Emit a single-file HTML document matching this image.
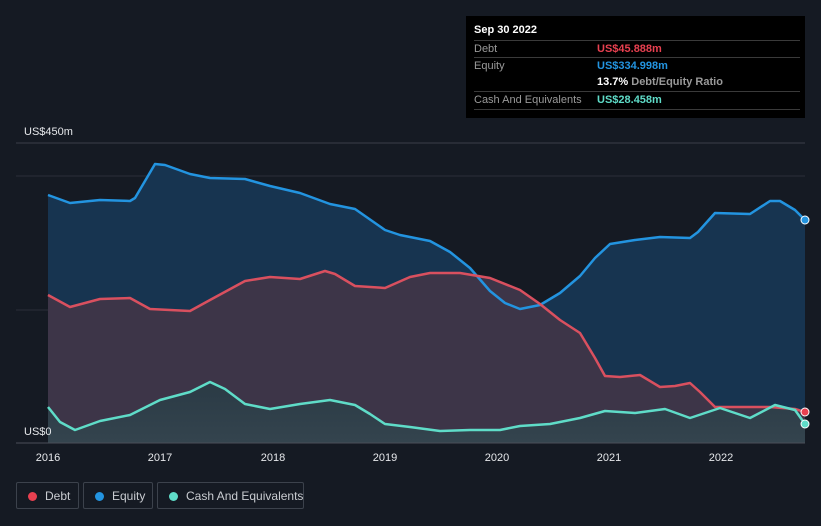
<!DOCTYPE html>
<html style="margin:0;width:821px;height:526px;overflow:hidden"><head><style>
body{margin:0;width:821px;height:526px;background:#151a23;font-family:"Liberation Sans",sans-serif;overflow:hidden;position:relative}
.tt{position:absolute;left:466px;top:16px;width:339px;height:102px;background:#000;color:#fff;font-size:11px}
.row{position:absolute;left:8px;width:326px;border-top:1px solid #3a3a3a;height:17px;line-height:17px;color:#9a9a9a;white-space:nowrap}
.row b{position:absolute;left:123px;font-weight:bold}
.leg{position:absolute;top:482px;height:27px;border:1px solid #3c424c;border-radius:2px;color:#c9ccd1;font-size:12px;line-height:27px;box-sizing:border-box;white-space:nowrap}
.leg i{position:absolute;left:11px;top:9px;width:9px;height:9px;border-radius:50%}
.leg span{position:absolute;left:28px}
</style></head><body>
<svg width="821" height="526" style="position:absolute;left:0;top:0">
<defs><linearGradient id="g" x1="0" y1="0" x2="0" y2="1"><stop offset="0" stop-color="#2a3a45"/><stop offset="1" stop-color="#34444e"/></linearGradient></defs>
<line x1="16" y1="143" x2="805" y2="143" stroke="#3a3f48"/>
<line x1="16" y1="176" x2="805" y2="176" stroke="#2a2f38"/>
<line x1="16" y1="310" x2="805" y2="310" stroke="#2a2f38"/>
<polygon fill="#173450" points="48,195 70,203 100,200 130,201 135,198 155,164 165,165 190,174 210,178 245,179 270,186 300,193 330,204 355,209 365,216 385,230 400,235 430,241 450,252 470,268 490,291 505,303 520,309 540,305 560,293 580,276 595,258 610,244 635,240 660,237 690,238 698,232 715,213 750,214 770,201 780,201 795,210 805,220 805,443 48,443"/>
<polygon fill="#3d3548" points="48,295 70,307 100,299 130,298 150,309 190,311 210,300 245,281 270,277 300,279 325,271 335,274 355,286 385,288 410,277 430,273 460,273 490,278 520,290 540,304 560,320 580,333 595,358 605,376 620,377 640,375 660,387 675,386 690,383 700,392 715,407 740,407 770,407 795,409 805,412 805,443 48,443"/>
<polygon fill="url(#g)" points="48,407 60,422 75,430 100,421 130,415 160,400 190,392 210,382 225,389 245,404 270,409 300,404 330,400 355,405 370,414 385,424 410,427 440,431 470,430 500,430 520,426 550,424 580,418 605,411 635,413 665,409 690,418 720,408 750,418 775,405 795,410 805,424 805,443 48,443"/>
<polyline fill="none" stroke="#2394e0" stroke-width="2.5" stroke-linejoin="round" points="48,195 70,203 100,200 130,201 135,198 155,164 165,165 190,174 210,178 245,179 270,186 300,193 330,204 355,209 365,216 385,230 400,235 430,241 450,252 470,268 490,291 505,303 520,309 540,305 560,293 580,276 595,258 610,244 635,240 660,237 690,238 698,232 715,213 750,214 770,201 780,201 795,210 805,220"/>
<polyline fill="none" stroke="#d9505f" stroke-width="2.5" stroke-linejoin="round" points="48,295 70,307 100,299 130,298 150,309 190,311 210,300 245,281 270,277 300,279 325,271 335,274 355,286 385,288 410,277 430,273 460,273 490,278 520,290 540,304 560,320 580,333 595,358 605,376 620,377 640,375 660,387 675,386 690,383 700,392 715,407 740,407 770,407 795,409 805,412"/>
<polyline fill="none" stroke="#5fdcc8" stroke-width="2.5" stroke-linejoin="round" points="48,407 60,422 75,430 100,421 130,415 160,400 190,392 210,382 225,389 245,404 270,409 300,404 330,400 355,405 370,414 385,424 410,427 440,431 470,430 500,430 520,426 550,424 580,418 605,411 635,413 665,409 690,418 720,408 750,418 775,405 795,410 805,424"/>
<line x1="16" y1="443" x2="805" y2="443" stroke="#4a4f58"/>
<circle cx="805" cy="220" r="4" fill="#2394e0" stroke="#fff" stroke-width="1"/>
<circle cx="805" cy="412" r="4" fill="#e84050" stroke="#fff" stroke-width="1"/>
<circle cx="805" cy="424" r="4" fill="#5fdcc8" stroke="#fff" stroke-width="1"/>
<g fill="#e6e8eb" font-size="11" text-anchor="middle">
<text x="48" y="461">2016</text><text x="160" y="461">2017</text><text x="273" y="461">2018</text><text x="385" y="461">2019</text><text x="497" y="461">2020</text><text x="609" y="461">2021</text><text x="721" y="461">2022</text></g>
<text x="24" y="135" fill="#e6e8eb" font-size="11">US$450m</text>
<text x="24" y="435" fill="#e6e8eb" font-size="11">US$0</text>
</svg>
<div class="tt">
<div style="position:absolute;left:8px;top:8px;font-weight:bold">Sep 30 2022</div>
<div class="row" style="top:24px">Debt<b style="color:#e84050">US$45.888m</b></div>
<div class="row" style="top:41px">Equity<b style="color:#2394e0">US$334.998m</b></div>
<div class="row" style="top:58px;border-top:none"><b style="color:#fff">13.7% <span style="color:#9a9a9a">Debt/Equity Ratio</span></b></div>
<div class="row" style="top:75px;border-bottom:1px solid #3a3a3a">Cash And Equivalents<b style="color:#5fdcc8">US$28.458m</b></div>
</div>
<div class="leg" style="left:16px;width:63px"><i style="background:#e84050"></i><span>Debt</span></div>
<div class="leg" style="left:83px;width:70px"><i style="background:#2394e0"></i><span>Equity</span></div>
<div class="leg" style="left:157px;width:147px"><i style="background:#5fdcc8"></i><span>Cash And Equivalents</span></div>
</body></html>
